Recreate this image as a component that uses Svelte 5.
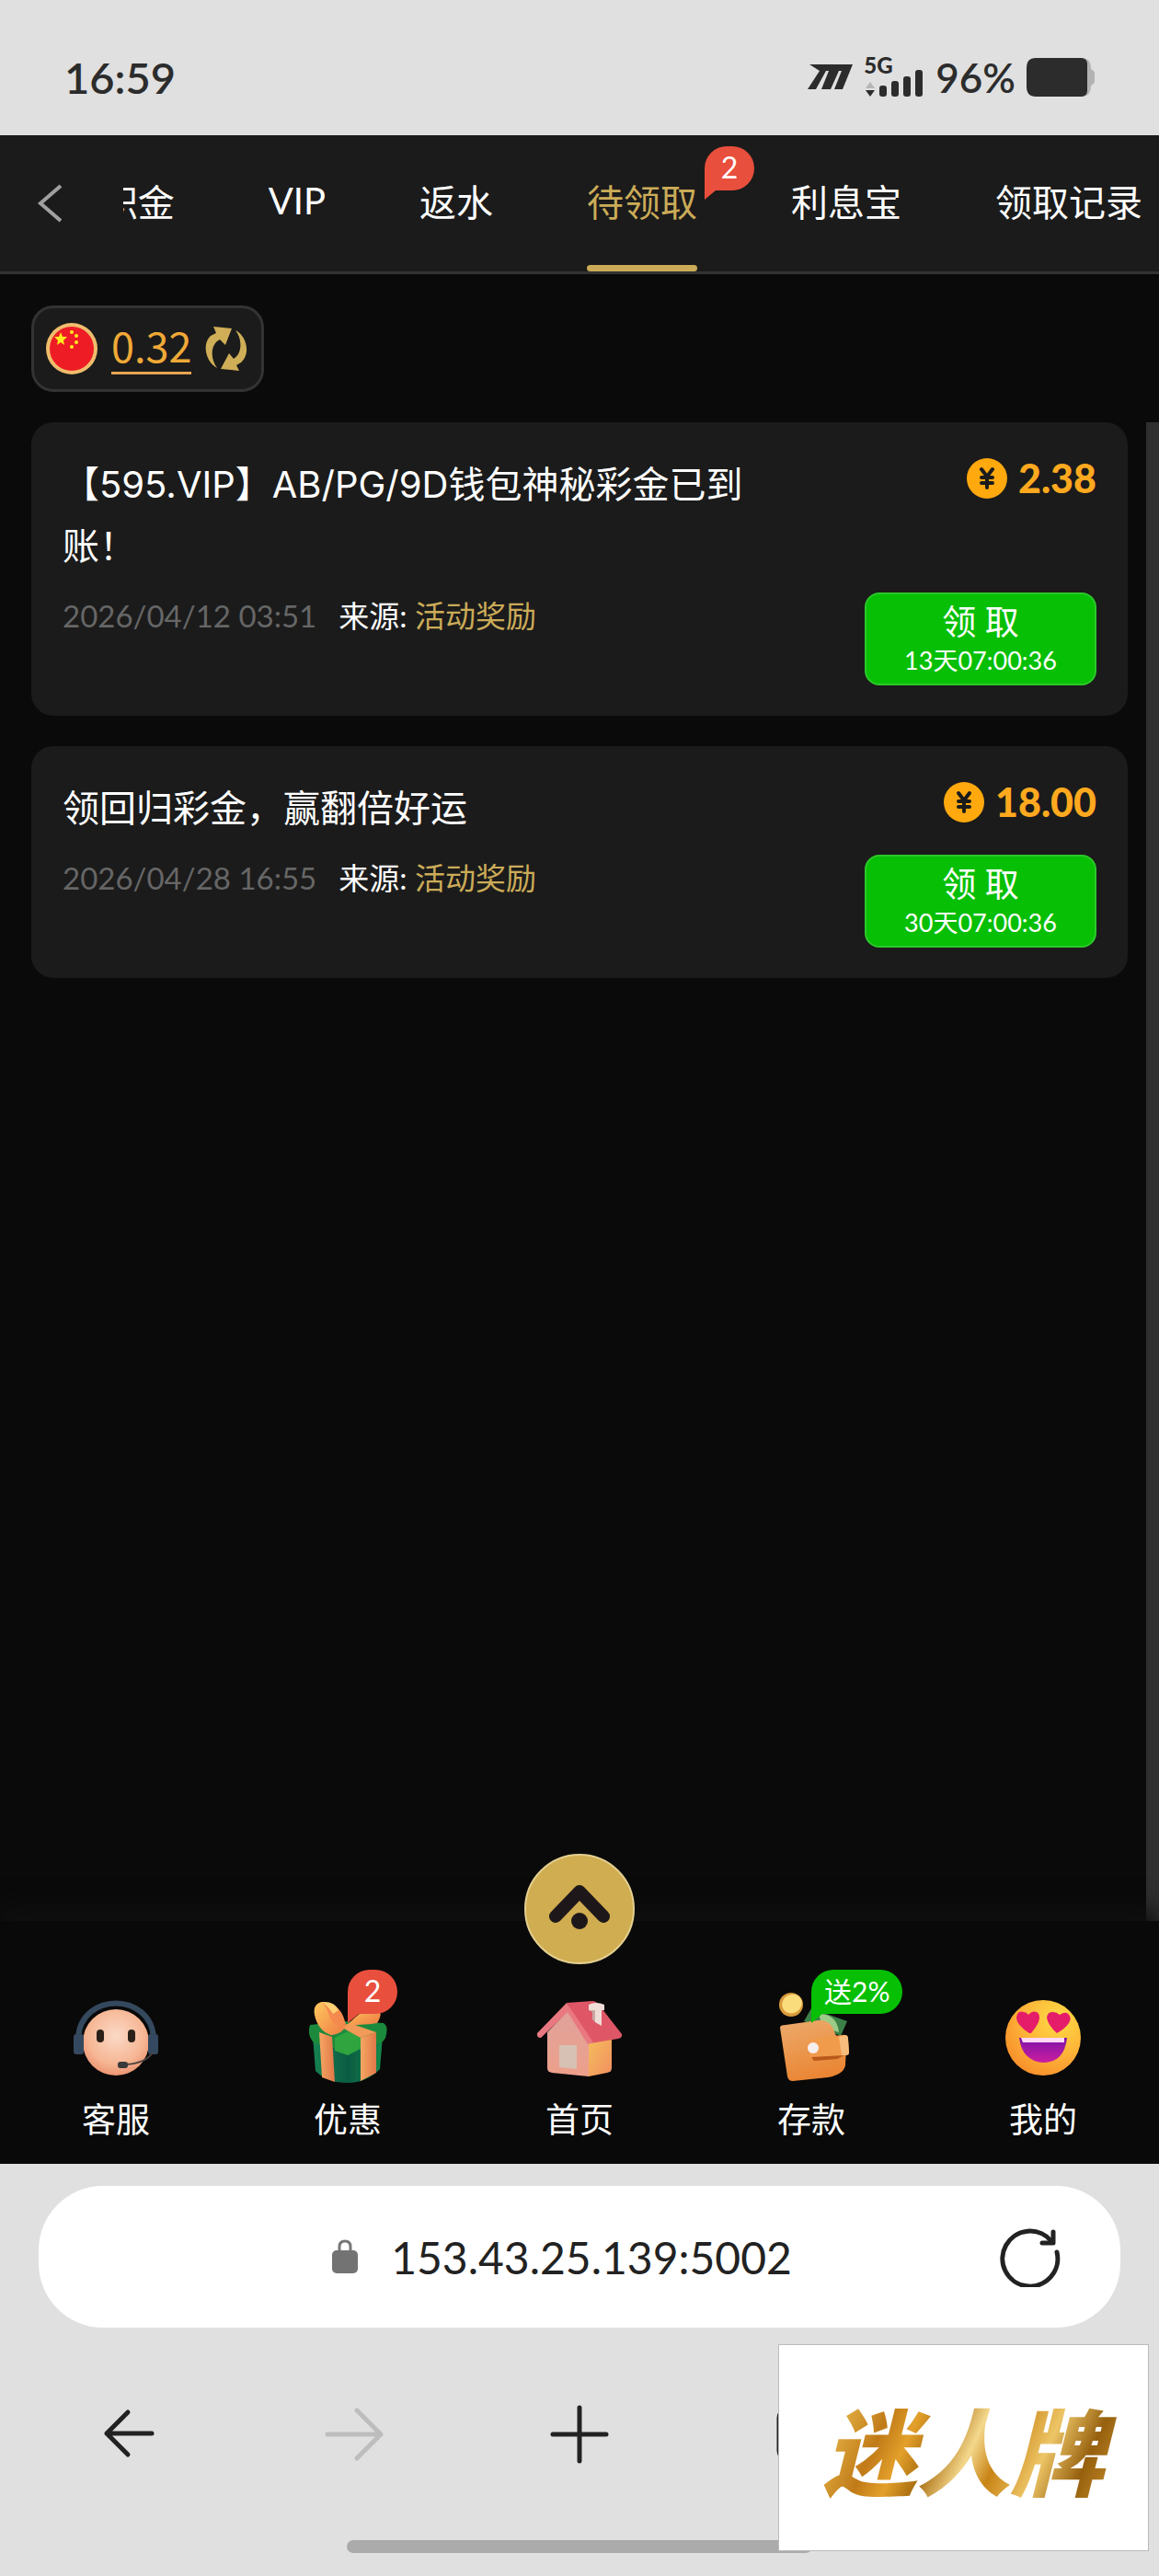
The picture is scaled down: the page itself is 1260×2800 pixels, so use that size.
<script lang="ts">
	interface Tab {
		label: string;
		badge?: string;
	}

	interface Reward {
		title: string;
		time: string;
		source: string;
		amount: string;
		expires: string;
	}

	interface NavItem {
		id: string;
		label: string;
		badge?: string;
		tone?: string;
	}

	const tabs: Tab[] = [
		{ label: '积金' },
		{ label: 'VIP' },
		{ label: '返水' },
		{ label: '待领取', badge: '2' },
		{ label: '利息宝' },
		{ label: '领取记录' }
	];

	const rewards: Reward[] = [
		{
			title: '【595.VIP】AB/PG/9D钱包神秘彩金已到账！',
			time: '2026/04/12 03:51',
			source: '活动奖励',
			amount: '2.38',
			expires: '13天07:00:36'
		},
		{
			title: '领回归彩金，赢翻倍好运',
			time: '2026/04/28 16:55',
			source: '活动奖励',
			amount: '18.00',
			expires: '30天07:00:36'
		}
	];

	const nav: NavItem[] = [
		{ id: 'service', label: '客服' },
		{ id: 'promo', label: '优惠', badge: '2', tone: 'red' },
		{ id: 'home', label: '首页' },
		{ id: 'deposit', label: '存款', badge: '送2%', tone: 'green' },
		{ id: 'mine', label: '我的' }
	];

	let active = $state('待领取');
</script>

<div class="phone">
	<div class="status">
		<span class="clock">16:59</span>
		<div class="status-right">
			<svg width="50" height="30" viewBox="0 0 50 30" fill="#2c2c2c">
				<path d="M2 1H49L38 28H29L37 8H34L25 28H15L23 8H20L9 28H0L13 8Z" />
			</svg>
			<div class="signal">
				<span class="net">5G</span>
				<svg width="65" height="44" viewBox="0 0 65 44" fill="#2c2c2c">
					<path d="M1 34L6 27L11 34Z" fill="#b5b5b5" />
					<path d="M1 36H11L6 43Z" />
					<rect x="16" y="31" width="8" height="12" rx="3" />
					<rect x="29" y="26" width="8" height="17" rx="3" />
					<rect x="42" y="21" width="8" height="22" rx="3" />
					<rect x="55" y="14" width="8" height="29" rx="3" />
				</svg>
			</div>
			<span class="percent">96%</span>
			<svg width="74" height="42" viewBox="0 0 74 42">
				<path d="M60 0Q70 0 70 12Q74 14 74 17V25Q74 28 70 30Q70 42 60 42Z" fill="#b2b2b2" />
				<path d="M10 0H60Q66 1 66 6V36Q66 41 60 42H10Q0 42 0 31V11Q0 0 10 0Z" fill="#2c2c2c" />
			</svg>
		</div>
	</div>

	<header class="tabs">
		<button class="back" aria-label="返回">
			<svg width="28" height="42" viewBox="0 0 28 42" fill="none" stroke="#a0a0a0" stroke-width="4">
				<path d="M26 2L4 21L26 40" />
			</svg>
		</button>
		<nav class="tab-strip">
			{#each tabs as tab}
				<button class="tab" class:active={tab.label === active} onclick={() => (active = tab.label)}>
					{tab.label}
					{#if tab.badge}
						<span class="badge red">{tab.badge}</span>
					{/if}
				</button>
			{/each}
		</nav>
	</header>

	<main class="content">
		<div class="wallet">
			<svg width="58" height="58" viewBox="0 0 58 58">
				<circle cx="29" cy="29" r="28" fill="#f0bd6c" />
				<circle cx="29" cy="29" r="24" fill="#ee1c25" />
				<g fill="#ffec1f">
					<path d="M17 11L19 16H24L20 20L21 25L17 22L13 25L14 20L10 16H15Z" />
					<circle cx="29" cy="11" r="2" />
					<circle cx="34" cy="15" r="2" />
					<circle cx="34" cy="22" r="2" />
					<circle cx="29" cy="27" r="2" />
				</g>
			</svg>
			<a class="balance" href="#wallet">0.32</a>
			<button class="sync" aria-label="刷新余额">
				<svg width="48" height="50" viewBox="0 0 48 50" fill="#cfae57">
					<path d="M10 1L30 3L23 21L17 15C7 20 6 35 14 46C2 40 -3 20 7 11L13 8Z" />
					<path d="M38 49L18 47L27 30L32 36C41 31 42 15 34 5C46 11 51 30 40 40L35 43Z" />
				</svg>
			</button>
		</div>

		<div class="scroll">
			<div class="list">
				{#each rewards as reward}
					<article class="card">
						<h2 class="title">{reward.title}</h2>
						<div class="amount">
							<svg width="44" height="44" viewBox="0 0 44 44">
								<circle cx="22" cy="22" r="22" fill="#ffa90f" />
								<path
									d="M16 12L22 20L28 12M22 20V32M16 21H28M16 27H28"
									fill="none"
									stroke="#1b1b1b"
									stroke-width="4"
									stroke-linecap="round"
								/>
							</svg>
							{reward.amount}
						</div>
						<p class="meta">
							<time>{reward.time}</time>
							<span>来源: <b>{reward.source}</b></span>
						</p>
						<button class="claim">
							<span class="claim-label">领 取</span>
							<span class="claim-time">{reward.expires}</span>
						</button>
					</article>
				{/each}
			</div>
			<div class="scrollbar"></div>
		</div>
	</main>

	<nav class="dock">
		<button class="fab" aria-label="展开">
			<svg width="120" height="120" viewBox="0 0 120 120">
				<circle cx="60" cy="60" r="59" fill="#cfad50" stroke="#e4cf90" stroke-width="2" />
				<path
					d="M34 68L60 41L86 68"
					fill="none"
					stroke="#1e171a"
					stroke-width="14"
					stroke-linecap="round"
					stroke-linejoin="round"
				/>
				<circle cx="60" cy="73" r="9" fill="#1e171a" />
			</svg>
		</button>
		{#each nav as item}
			<a class="dock-item" href="#{item.id}">
				<span class="dock-icon">
					{#if item.id === 'service'}
						<svg viewBox="0 0 100 100">
							<defs>
								<radialGradient id="skin" cx="0.5" cy="0.4" r="0.6">
									<stop offset="0" stop-color="#fbd9c6" />
									<stop offset="0.7" stop-color="#f6b795" />
									<stop offset="1" stop-color="#ec9673" />
								</radialGradient>
							</defs>
							<path d="M9 50C12 0 88 0 91 50" fill="none" stroke="#34495e" stroke-width="6" />
							<circle cx="50" cy="55" r="36" fill="url(#skin)" />
							<rect x="4" y="46" width="11" height="22" rx="3" fill="#34495f" />
							<rect x="85" y="46" width="11" height="22" rx="3" fill="#34495f" />
							<rect x="29" y="41" width="8" height="14" rx="4" fill="#2b2118" />
							<rect x="63" y="41" width="8" height="14" rx="4" fill="#2b2118" />
							<path d="M90 66Q82 78 60 79" fill="none" stroke="#4c4340" stroke-width="2" />
							<rect x="52" y="76" width="11" height="7" rx="3" fill="#3a3a3c" />
						</svg>
					{:else if item.id === 'promo'}
						<svg viewBox="0 0 100 100">
							<defs>
								<linearGradient id="ribbon" x1="0" y1="0" x2="1" y2="1">
									<stop offset="0" stop-color="#ffc95d" />
									<stop offset="1" stop-color="#ee7a45" />
								</linearGradient>
								<linearGradient id="strap" x1="0" y1="0" x2="1" y2="0">
									<stop offset="0" stop-color="#f6a763" />
									<stop offset="1" stop-color="#e07748" />
								</linearGradient>
								<linearGradient id="box" x1="0" y1="0" x2="1" y2="0">
									<stop offset="0" stop-color="#168352" />
									<stop offset="0.5" stop-color="#0b5b43" />
									<stop offset="1" stop-color="#168a4a" />
								</linearGradient>
							</defs>
							<path d="M12 48H88L85 84Q70 99 50 99Q28 99 15 86Z" fill="url(#box)" />
							<path d="M9 36L46 32L89 34Q94 37 92 46Q91 54 84 56L65 59Q50 70 35 61L14 56Q7 50 8 40Z" fill="#1c8a3c" />
							<path d="M36 50L50 43L64 48V62L50 69L36 64Z" fill="#2fa43f" />
							<path d="M19 44L33 49L36 98L22 93Z" fill="url(#strap)" />
							<path d="M64 50L81 44L81 88L64 97Z" fill="url(#strap)" />
							<path d="M52 34L81 44L64 50L42 38Z" fill="#f29a58" />
							<path d="M48 37Q44 12 22 11Q12 13 15 26Q18 42 32 47Q44 46 48 37Z" fill="#f58a4f" />
							<path d="M22 11Q10 14 15 29Q20 44 33 47Q46 44 48 33Q36 42 31 28Q27 16 22 11Z" fill="url(#ribbon)" />
							<path d="M22 11Q36 10 40 20L34 24Q29 16 22 11Z" fill="#ffd173" />
							<path d="M50 36Q66 18 80 16Q90 22 82 34Q70 36 50 36Z" fill="url(#ribbon)" />
						</svg>
					{:else if item.id === 'home'}
						<svg viewBox="0 0 100 100">
							<defs>
								<linearGradient id="wall" x1="0" y1="0" x2="0" y2="1">
									<stop offset="0" stop-color="#dfa29b" />
									<stop offset="1" stop-color="#eda08a" />
								</linearGradient>
								<linearGradient id="side" x1="0" y1="0" x2="1" y2="1">
									<stop offset="0" stop-color="#f6bd5d" />
									<stop offset="1" stop-color="#f0905f" />
								</linearGradient>
							</defs>
							<path d="M60 50H85V83Q85 87 80 88L60 92Z" fill="url(#side)" />
							<path d="M15 44L38 20L60 50V92L20 88Q15 87 15 83Z" fill="url(#wall)" />
							<path d="M36 12L64 10Q68 10 71 14L96 46Q97 50 92 51L62 56Z" fill="#df5767" />
							<path d="M36 12L4 45Q3 50 8 50L37 22L59 57L65 55Z" fill="#ea7880" />
							<path d="M60 14Q68 10 77 14V20H74V37L67 33V20H60Z" fill="#f0ddd8" />
							<path d="M60 20H67V33L64 30V22Z" fill="#c9a9a4" />
							<path d="M28 58H47V84L28 82Z" fill="#d6c1b4" />
						</svg>
					{:else if item.id === 'deposit'}
						<svg viewBox="0 0 100 100">
							<defs>
								<linearGradient id="leather" x1="0.3" y1="0" x2="0.6" y2="1">
									<stop offset="0" stop-color="#eca868" />
									<stop offset="1" stop-color="#ea8330" />
								</linearGradient>
							</defs>
							<path d="M42 32L50 18L89 32L82 48Z" fill="#3c8047" />
							<path d="M58 24Q78 24 80 44L62 38Z" fill="#9ccb87" />
							<ellipse cx="28" cy="14" rx="13" ry="13" fill="#d99b3b" />
							<ellipse cx="29" cy="13" rx="11" ry="10" fill="#fbdc7c" transform="rotate(-30 29 13)" />
							<path d="M16 39Q16 36 22 36L58 31Q72 30 76 46L88 60L87 80Q85 90 68 93L30 97Q25 97 24 92Z" fill="url(#leather)" />
							<path d="M49 53Q50 51 54 51L83 47Q89 46 90 51L91 66Q91 69 87 69L53 73Q48 73 48 68Z" fill="#f09a4c" />
							<path d="M50 71L86 69L78 73L53 75Z" fill="#b9591a" />
							<path d="M80 49L87 47Q90 47 90 51L91 66Q91 69 87 69L83 69Z" fill="#f8bd7c" />
							<circle cx="52" cy="61" r="6" fill="#f6efee" />
						</svg>
					{:else}
						<svg viewBox="0 0 100 100">
							<defs>
								<radialGradient id="smile" cx="0.7" cy="0.25" r="0.8">
									<stop offset="0" stop-color="#ffdb44" />
									<stop offset="0.6" stop-color="#fdb338" />
									<stop offset="1" stop-color="#f8922c" />
								</radialGradient>
								<linearGradient id="mouth" x1="0" y1="0" x2="0" y2="1">
									<stop offset="0" stop-color="#7d12a8" />
									<stop offset="1" stop-color="#cc1ea0" />
								</linearGradient>
							</defs>
							<circle cx="50" cy="50" r="41" fill="url(#smile)" />
							<path d="M35 45Q21 36 21 28Q22 20 29 22Q32 22 34 25Q38 20 43 22Q48 25 45 33Q42 39 37 45Z" fill="#e51c69" />
							<path d="M65 45Q55 36 54 28Q55 21 61 22Q65 22 68 25Q72 22 76 23Q82 27 78 34Q74 40 65 45Z" fill="#e51c69" />
							<path d="M24 50H76Q73 77 50 77Q27 75 24 50Z" fill="url(#mouth)" />
							<path d="M26 50H73V55H28Z" fill="#ffd9f5" />
						</svg>
					{/if}
					{#if item.badge}
						<span class="badge {item.tone}">{item.badge}</span>
					{/if}
				</span>
				<span class="dock-label">{item.label}</span>
			</a>
		{/each}
	</nav>

	<footer class="browser">
		<div class="address">
			<div class="url">
				<svg width="28" height="38" viewBox="0 0 28 38">
					<path d="M8 15V8Q8 2 14 2Q20 2 20 8V15" fill="none" stroke="#777" stroke-width="3" />
					<rect x="0" y="12" width="28" height="25" rx="5" fill="#737373" />
				</svg>
				<span>153.43.25.139:5002</span>
			</div>
			<button class="reload" aria-label="重新加载">
				<svg width="66" height="66" viewBox="0 0 66 66" fill="none" stroke="#222" stroke-width="5" stroke-linecap="round" stroke-linejoin="round">
					<path d="M62 28A30 30 0 1 1 56 16" />
					<path d="M58 6V18H46" />
				</svg>
			</button>
		</div>
		<div class="toolbar">
			<button aria-label="后退">
				<svg width="64" height="64" viewBox="0 0 64 64">
					<path d="M57 31H8M31 8L8 31L31 54" />
				</svg>
			</button>
			<button class="off" aria-label="前进" disabled>
				<svg width="64" height="64" viewBox="0 0 64 64">
					<path d="M3 32H61M35 6L61 32L35 58" />
				</svg>
			</button>
			<button aria-label="新标签页">
				<svg width="64" height="64" viewBox="0 0 64 64">
					<path d="M3 32H61M32 3V61" />
				</svg>
			</button>
			<button aria-label="标签页">
				<svg width="64" height="64" viewBox="0 0 64 64">
					<rect x="4" y="6" width="54" height="52" rx="8" />
				</svg>
			</button>
			<button aria-label="菜单">
				<svg width="64" height="64" viewBox="0 0 64 64">
					<path d="M6 14H58M6 32H58M6 50H58" />
				</svg>
			</button>
		</div>
		<div class="home-bar"></div>
		<div class="stamp"><span>迷人牌</span></div>
	</footer>
</div>

<style>
	:global(body) {
		margin: 0;
		background: #0a0a0a;
	}

	.phone {
		min-height: 100vh;
		display: flex;
		flex-direction: column;
		overflow: hidden;
		font-family: Lato, 'Noto Sans CJK SC', sans-serif;
		color: #fff;
	}

	button {
		padding: 0;
		border: none;
		background: none;
		font: inherit;
		color: inherit;
		cursor: pointer;
	}

	svg {
		display: block;
		flex-shrink: 0;
	}

	/* ── Status bar ── */
	.status {
		display: flex;
		align-items: center;
		justify-content: space-between;
		height: 84px;
		padding: 42px 70px 21px;
		background: #e0e0e0;
		color: #2c2c2c;
	}

	.clock {
		font-size: 47px;
		font-weight: 600;
	}

	.status-right {
		display: flex;
		align-items: center;
		gap: 12px;
	}

	.signal {
		position: relative;
	}

	.net {
		position: absolute;
		top: -3px;
		left: -1px;
		font-size: 24px;
		line-height: 24px;
		font-weight: 900;
	}

	.percent {
		font-size: 44px;
		font-weight: 600;
	}

	/* ── Top tabs ── */
	.tabs {
		display: flex;
		height: 148px;
		border-bottom: 3px solid #333;
		background: #1b1b1b;
	}

	.back {
		flex: 0 0 134px;
		padding-left: 40px;
	}

	.tab-strip {
		flex: 1;
		min-width: 0;
		display: flex;
		justify-content: flex-end;
		gap: 102px;
		padding-right: 18px;
		overflow: hidden;
	}

	.tab {
		position: relative;
		flex-shrink: 0;
		padding-bottom: 6px;
		font-size: 40px;
		white-space: nowrap;
	}

	.tab.active {
		color: #cbab58;
	}

	.tab.active::after {
		content: '';
		position: absolute;
		right: 0;
		bottom: 0;
		left: 0;
		height: 7px;
		border-radius: 4px;
		background: #cbab58;
	}

	.badge {
		position: absolute;
		top: 12px;
		left: calc(100% + 8px);
		box-sizing: border-box;
		min-width: 54px;
		height: 48px;
		padding: 0 14px;
		border-radius: 24px 24px 24px 0;
		font-size: 32px;
		line-height: 46px;
		text-align: center;
		white-space: nowrap;
		color: #fff;
	}

	.badge::after {
		content: '';
		position: absolute;
		top: 100%;
		left: 0;
		border-right: 12px solid transparent;
		border-top: 10px solid;
	}

	.badge.red {
		background: #e94f3d;
	}

	.badge.red::after {
		border-top-color: #e94f3d;
	}

	.badge.green {
		background: #07bf05;
		font-size: 30px;
	}

	.badge.green::after {
		border-top-color: #07bf05;
	}

	/* ── Content ── */
	.content {
		flex: 1;
		display: flex;
		flex-direction: column;
		gap: 33px;
		padding-top: 34px;
		background: #0a0a0a;
	}

	.wallet {
		align-self: flex-start;
		display: flex;
		align-items: center;
		gap: 14px;
		height: 88px;
		margin-left: 34px;
		padding: 0 14px 0 12px;
		border: 3px solid #333;
		border-radius: 24px;
		background: #1b1b1b;
	}

	.balance {
		padding-bottom: 6px;
		border-bottom: 3px solid #e8a552;
		font-family: 'Noto Sans CJK SC', sans-serif;
		font-size: 45px;
		line-height: 46px;
		color: #f0a937;
		text-decoration: none;
	}

	.scroll {
		flex: 1;
		display: flex;
		gap: 20px;
		padding-left: 34px;
	}

	.list {
		flex: 1;
		display: flex;
		flex-direction: column;
		gap: 33px;
	}

	.scrollbar {
		width: 14px;
		background: #2f2f2f;
	}

	.card {
		display: grid;
		grid-template-columns: minmax(0, 760px) auto;
		justify-content: space-between;
		gap: 17px;
		padding: 34px 34px 33px;
		border-radius: 24px;
		background: #1b1b1b;
	}

	.title {
		margin: 0;
		font-family: Inter, 'Noto Sans CJK SC', sans-serif;
		font-size: 40px;
		line-height: 67px;
		font-weight: 400;
	}

	.amount {
		display: flex;
		align-items: center;
		justify-content: flex-end;
		gap: 12px;
		height: 53px;
		font-size: 43px;
		font-weight: 900;
		color: #ffa91f;
	}

	.meta {
		display: flex;
		gap: 24px;
		margin: 0;
		font-size: 33px;
		line-height: 51px;
	}

	.meta time {
		color: #666;
	}

	.meta b {
		font-weight: 400;
		color: #cbab58;
	}

	.claim {
		justify-self: end;
		display: flex;
		flex-direction: column;
		align-items: center;
		justify-content: center;
		width: 252px;
		height: 101px;
		border: 2px solid #2cc82a;
		border-radius: 16px;
		background: #07bf05;
	}

	.claim-label {
		font-size: 37px;
		line-height: 46px;
	}

	.claim-time {
		font-size: 27px;
		line-height: 38px;
	}

	/* ── Bottom dock ── */
	.dock {
		position: relative;
		display: grid;
		grid-template-columns: repeat(5, 1fr);
		padding: 77px 0 21px;
		background: #090909;
		box-shadow: 0 -12px 24px #101010;
	}

	.fab {
		position: absolute;
		top: -73px;
		left: calc(50% - 60px);
	}

	.dock-item {
		display: flex;
		flex-direction: column;
		align-items: center;
		gap: 12px;
		color: #fff;
		text-decoration: none;
	}

	.dock-icon {
		position: relative;
		width: 100px;
		height: 100px;
	}

	.dock-icon .badge {
		top: -24px;
		left: 50%;
	}

	.dock-label {
		font-size: 37px;
		line-height: 54px;
	}

	/* ── Browser chrome ── */
	.browser {
		position: relative;
		display: flex;
		flex-direction: column;
		align-items: center;
		padding: 24px 42px 25px;
		background: #e0e0e0;
		color: #222;
	}

	.address {
		align-self: stretch;
		display: grid;
		grid-template-columns: 1fr auto 1fr;
		align-items: center;
		height: 154px;
		padding: 0 65px;
		border-radius: 70px;
		background: #fff;
	}

	.url {
		grid-column: 2;
		display: flex;
		align-items: center;
		gap: 36px;
		padding-right: 38px;
		font-size: 48px;
	}

	.reload {
		justify-self: end;
	}

	.toolbar {
		align-self: stretch;
		display: grid;
		grid-template-columns: repeat(5, 1fr);
		height: 231px;
		margin: 0 -24px;
	}

	.toolbar button {
		display: grid;
		place-items: center;
	}

	.toolbar svg {
		fill: none;
		stroke: #222;
		stroke-width: 5;
		stroke-linecap: round;
		stroke-linejoin: round;
	}

	.toolbar .off svg {
		stroke: #bdbdbd;
	}

	.home-bar {
		width: 43%;
		height: 14px;
		border-radius: 7px;
		background: #ababab;
	}

	.stamp {
		position: absolute;
		right: 11px;
		bottom: 27px;
		box-sizing: border-box;
		display: grid;
		place-items: center;
		width: 403px;
		height: 225px;
		border: 1px solid #bbb;
		background: #fff;
	}

	.stamp span {
		padding: 0 20px;
		background: linear-gradient(115deg, #b47a14, #e0ac40 14%, #c07a18 26%, #e3a02a 34%, #a86c10 42%, #f4d88c 52%, #c98416 60%, #edc566 72%, #96600e 84%, #d9a136);
		background-clip: text;
		font-family: 'Noto Sans CJK SC', sans-serif;
		font-size: 102px;
		line-height: 140px;
		font-weight: 900;
		font-style: italic;
		color: transparent;
	}
</style>
